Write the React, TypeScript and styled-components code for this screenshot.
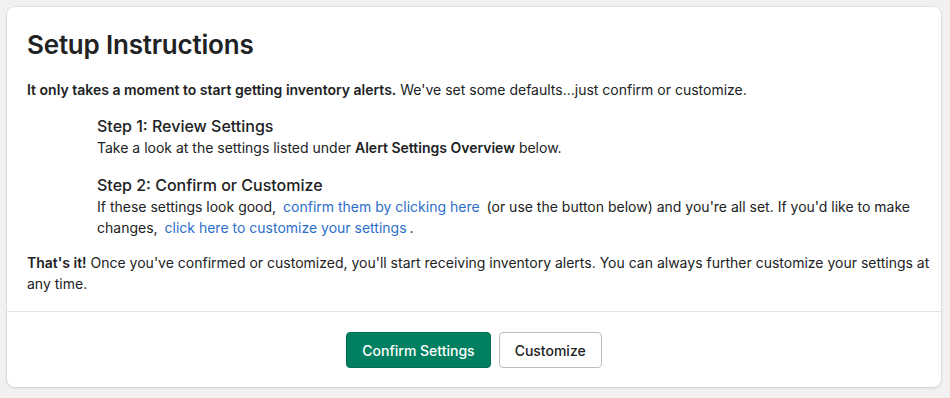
import React from 'react'
import styled, { createGlobalStyle } from 'styled-components'

const Global = createGlobalStyle`
body {
  margin: 0;
  background: #f1f1f1;
  font-family: Inter, "Noto Sans", sans-serif;
  color: #202223;
}
`

const App = () => {
  const steps = [
    {
      title: 'Step 1: Review Settings',
      body: (
        <>
          Take a look at the settings listed under <b>Alert Settings Overview</b> below.
        </>
      ),
    },
    {
      title: 'Step 2: Confirm or Customize',
      body: (
        <>
          If these settings look good, <Link href="#">confirm them by clicking here</Link> (or use the button below) and
          you're all set. If you'd like to make changes, <Link href="#">click here to customize your settings</Link>.
        </>
      ),
    },
  ]

  return (
    <Page>
      <Global />
      <Card>
        <Section>
          <Title>Setup Instructions</Title>
          <Text>
            <b>It only takes a moment to start getting inventory alerts.</b> We've set some defaults...just confirm or
            customize.
          </Text>
          <StepList>
            {steps.map((s) => (
              <Step key={s.title}>
                <StepTitle>{s.title}</StepTitle>
                <Text>{s.body}</Text>
              </Step>
            ))}
          </StepList>
          <Text>
            <b>That's it!</b> Once you've confirmed or customized, you'll start receiving inventory alerts. You can always
            further customize your settings at any time.
          </Text>
        </Section>
        <Footer>
          <Button primary>Confirm Settings</Button>
          <Button>Customize</Button>
        </Footer>
      </Card>
    </Page>
  )
}

const Page = styled.div`
padding: 7px 9px 10px 7px;
`

const Card = styled.div`
background: #fff;
border-radius: 8px;
box-shadow: 0 0 0 1px rgba(63, 63, 68, 0.05), 0 1px 3px rgba(63, 63, 68, 0.15);
overflow: hidden;
`

const Section = styled.div`
padding: 20px 10px 17px 20px;
border-bottom: 1px solid #e1e3e5;
`

const Title = styled.h1`
margin: 0 0 16px;
font-size: 26px;
line-height: 36px;
font-weight: 600;
letter-spacing: -0.2px;
`

const Text = styled.p`
margin: 0;
font-size: 14px;
line-height: 21px;
color: #202223;
b {
  font-weight: 600;
}
`

const StepList = styled.div`
display: flex;
flex-direction: column;
gap: 16px;
padding: 15px 0 14px 70px;
`

const Step = styled.div``

const StepTitle = styled.div`
font-size: 16px;
line-height: 22px;
font-weight: 500;
`

const Link = styled.a`
color: #2c6ecb;
text-decoration: none;
margin: 0 3px 0 3px;
`

const Footer = styled.div`
display: flex;
justify-content: center;
gap: 8px;
padding: 20px 20px 19px;
`

const Button = styled.button<{ primary?: boolean }>`
height: 36px;
padding: 0 15px;
font-family: Inter, "Noto Sans", sans-serif;
font-size: 14px;
font-weight: 500;
border-radius: 4px;
cursor: pointer;
color: ${(p) => (p.primary ? '#fff' : '#202223')};
background: ${(p) => (p.primary ? '#008060' : '#fff')};
border: 1px solid ${(p) => (p.primary ? '#006e52' : '#babfc3')};
`

export default App
